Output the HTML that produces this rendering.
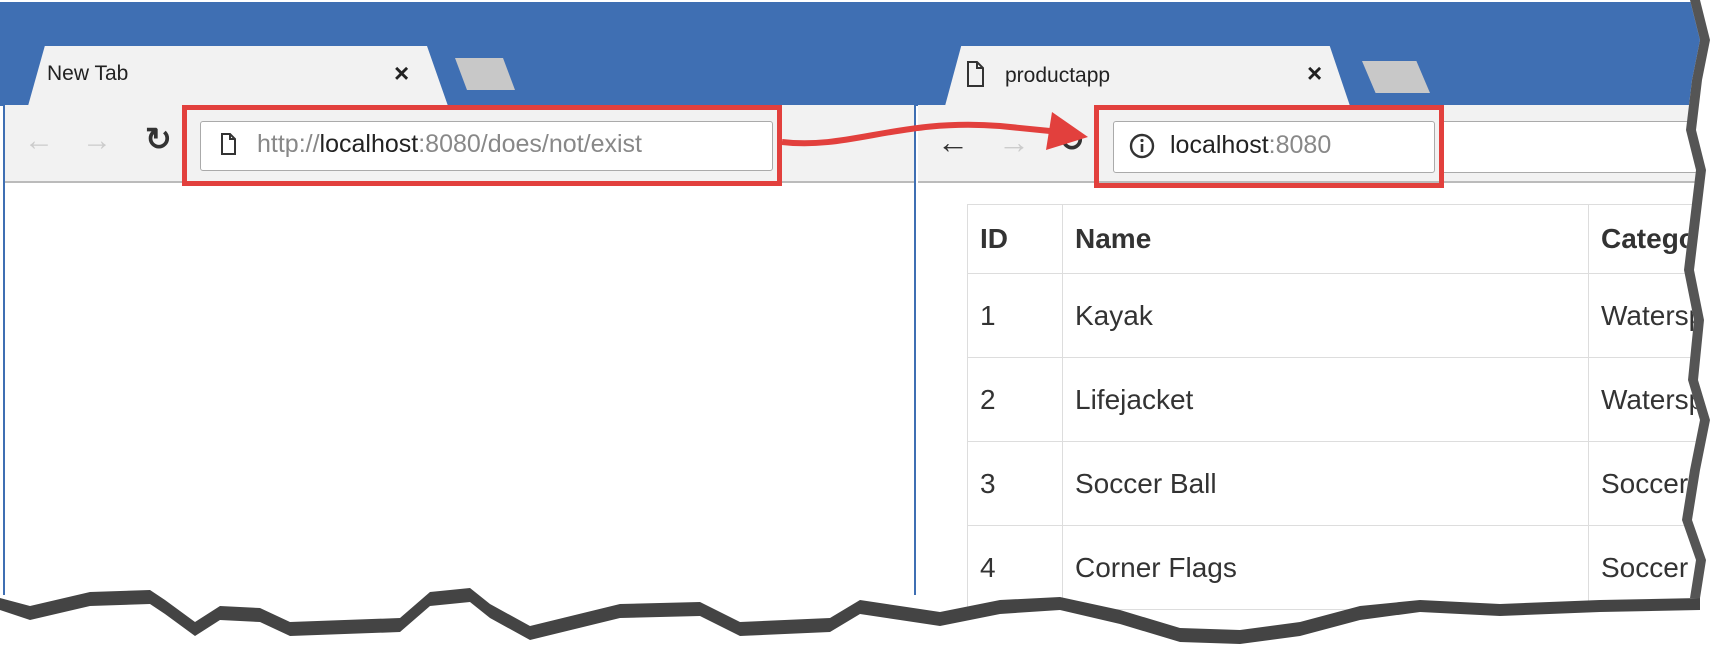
<!DOCTYPE html>
<html><head><meta charset="utf-8"><style>
*{margin:0;padding:0;box-sizing:border-box}
body{width:1725px;height:655px;overflow:hidden;background:#fff;font-family:"Liberation Sans",sans-serif;position:relative}
.a{position:absolute}
.tab{position:absolute;background:#f2f2f2;clip-path:polygon(4% 0,95% 0,100% 100%,0 100%)}
.t{position:absolute;white-space:nowrap}
table{border-collapse:collapse;position:absolute;left:967px;top:204px;font-size:28px;color:#333;table-layout:fixed;width:821px}
td{border:1.5px solid #ddd;height:84px;padding:0 12px;vertical-align:middle;white-space:nowrap;overflow:hidden}
tr:first-child td{height:69px;font-weight:bold}
</style></head><body>
<div class="a" style="left:0;top:2px;width:1725px;height:104px;background:#3f6fb3"></div>
<!-- left window -->
<div class="tab" style="left:28px;top:46px;width:420px;height:60px"></div>
<div class="t" style="left:47px;top:62px;font-size:21px;color:#222">New Tab</div>
<div class="t" style="left:394px;top:58px;font-size:26px;color:#222;font-weight:bold">×</div>
<div class="a" style="left:455px;top:58px;width:60px;height:32px;background:#c8c8c8;clip-path:polygon(0 0,80% 0,100% 100%,20% 100%)"></div>
<div class="a" style="left:3px;top:105px;width:913px;height:78px;background:#f2f2f2;border-bottom:2px solid #bbb"></div>
<div class="t" style="left:24px;top:124px;font-size:30px;color:#ccc">←</div>
<div class="t" style="left:82px;top:124px;font-size:30px;color:#ccc">→</div>
<div class="t" style="left:145px;top:120px;font-size:32px;color:#333;font-weight:bold">↻</div>
<div class="a" style="left:3px;top:105px;width:2px;height:490px;background:#3f6fb3"></div>
<div class="a" style="left:914px;top:105px;width:2px;height:490px;background:#3f6fb3"></div>
<div class="a" style="left:200px;top:121px;width:573px;height:50px;background:#fff;border:1.5px solid #aaa;border-radius:3px"></div>
<svg class="a" style="left:220px;top:133px" width="16" height="22"><path d="M2 1h8l5 5v15H2z M10 1v5h5" fill="none" stroke="#333" stroke-width="2"/></svg>
<div class="t" style="left:257px;top:130px;font-size:25px;color:#888">http://<span style="color:#222">localhost</span>:8080/does/not/exist</div>
<div class="a" style="left:182px;top:105px;width:600px;height:81px;border:5px solid #e2403d"></div>
<!-- right window -->
<div class="tab" style="left:945px;top:46px;width:405px;height:60px"></div>
<svg class="a" style="left:966px;top:61px" width="18" height="26"><path d="M2 1h9l6 6v18H2z M11 1v6h6" fill="none" stroke="#333" stroke-width="2"/></svg>
<div class="t" style="left:1005px;top:64px;font-size:21px;color:#222">productapp</div>
<div class="t" style="left:1307px;top:58px;font-size:26px;color:#222;font-weight:bold">×</div>
<div class="a" style="left:1362px;top:61px;width:68px;height:32px;background:#c8c8c8;clip-path:polygon(0 0,80% 0,100% 100%,20% 100%)"></div>
<div class="a" style="left:918px;top:105px;width:800px;height:78px;background:#f2f2f2;border-bottom:2px solid #bbb"></div>
<div class="t" style="left:937px;top:124px;font-size:32px;color:#333">←</div>
<div class="t" style="left:998px;top:124px;font-size:32px;color:#ccc">→</div>
<div class="t" style="left:1058px;top:121px;font-size:32px;color:#333;font-weight:bold">↻</div>
<div class="a" style="left:1113px;top:121px;width:322px;height:52px;background:#fff;border:1.5px solid #aaa;border-radius:3px"></div>
<div class="a" style="left:1440px;top:121px;width:270px;height:52px;background:#fff;border-top:1.5px solid #aaa;border-bottom:1.5px solid #aaa"></div>
<svg class="a" style="left:1128px;top:132px" width="28" height="28"><circle cx="14" cy="14" r="11" fill="none" stroke="#333" stroke-width="2.4"/><path d="M14 12v8" stroke="#333" stroke-width="2.6"/><circle cx="14" cy="8.5" r="1.6" fill="#333"/></svg>
<div class="t" style="left:1170px;top:131px;font-size:25px;color:#222">localhost<span style="color:#888">:8080</span></div>
<div class="a" style="left:1094px;top:105px;width:350px;height:83px;border:5px solid #e2403d"></div>
<table>
<colgroup><col style="width:95px"><col style="width:526px"><col style="width:200px"></colgroup>
<tr><td>ID</td><td>Name</td><td>Category</td></tr>
<tr><td>1</td><td>Kayak</td><td>Watersports</td></tr>
<tr><td>2</td><td>Lifejacket</td><td>Watersports</td></tr>
<tr><td>3</td><td>Soccer Ball</td><td>Soccer</td></tr>
<tr><td>4</td><td>Corner Flags</td><td>Soccer</td></tr>
</table>
<svg class="a" style="left:0;top:0" width="1725" height="655">
<path d="M782 142 C850 150 900 118 1000 126 L1060 132" fill="none" stroke="#e2403d" stroke-width="6"/>
<path d="M1088 137 L1052 112 L1046 150 Z" fill="#e2403d"/>
<polygon fill="#fff" points="1690,0 1700,40 1692,80 1686,130 1696,170 1690,220 1684,270 1694,320 1688,380 1700,420 1690,470 1682,520 1696,560 1690,598 1725,598 1725,0"/>
<polygon fill="#555" points="1690,0 1700,40 1692,80 1686,130 1696,170 1690,220 1684,270 1694,320 1688,380 1700,420 1690,470 1682,520 1696,560 1690,598 1700,598 1706,560 1692,520 1700,470 1710,420 1698,380 1704,320 1694,270 1700,220 1706,170 1696,130 1702,80 1710,40 1700,0"/>
<polygon fill="#fff" points="0,598 30,606 90,592 150,590 165,600 195,622 220,606 260,608 290,622 400,618 430,592 470,588 490,604 530,626 620,604 700,602 720,612 740,622 830,618 860,600 900,606 940,612 1000,600 1060,597 1120,610 1180,628 1240,630 1300,622 1360,606 1420,600 1500,604 1600,600 1700,598 1725,598 1725,655 0,655"/>
<polygon fill="#444" points="0,598 30,606 90,592 150,590 165,600 195,622 220,606 260,608 290,622 400,618 430,592 470,588 490,604 530,626 620,604 700,602 720,612 740,622 830,618 860,600 900,606 940,612 1000,600 1060,597 1120,610 1180,628 1240,630 1300,622 1360,606 1420,600 1500,604 1600,600 1700,598 1700,610 1600,612 1500,616 1420,612 1360,620 1300,636 1240,644 1180,642 1120,624 1060,610 1000,614 940,626 900,620 860,614 830,632 740,636 720,626 700,616 620,618 530,640 490,618 470,602 430,606 400,632 290,636 260,622 220,620 195,636 165,614 150,604 90,606 30,620 0,610"/>
</svg>
</body></html>
